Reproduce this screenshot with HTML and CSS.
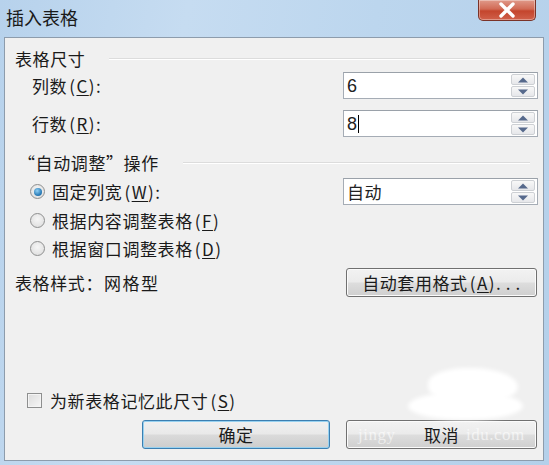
FILE: index.html
```html
<!DOCTYPE html>
<html lang="zh-CN">
<head>
<meta charset="utf-8">
<title>插入表格</title>
<link rel="stylesheet" href="styles.css">
</head>
<body>
<div class="window">
  <div class="titlebar">
    <span class="title">插入表格</span>
    <div class="close">
      <svg width="22" height="16" viewBox="0 0 22 16"><path d="M5 2 L17 14 M17 2 L5 14" stroke="#fff" stroke-width="3.4" stroke-linecap="round"/></svg>
    </div>
  </div>
  <div class="client">
    <div class="group h1"><span>表格尺寸</span><i class="rule"></i></div>
    <div class="row r-cols">
      <span class="label">列数<span class="acc">(<u>C</u>)</span>:</span>
      <div class="spin"><span class="val">6</span><div class="arrows"><b class="up"></b><b class="down"></b></div></div>
    </div>
    <div class="row r-rows">
      <span class="label">行数<span class="acc">(<u>R</u>)</span>:</span>
      <div class="spin"><span class="val">8<i class="caret"></i></span><div class="arrows"><b class="up"></b><b class="down"></b></div></div>
    </div>
    <div class="group h2"><span>“自动调整”操作</span><i class="rule"></i></div>
    <div class="row radio-row r-fixed">
      <span class="radio on"></span><span class="rlabel">固定列宽<span class="acc">(<u>W</u>)</span>:</span>
      <div class="spin"><span class="val cjk">自动</span><div class="arrows"><b class="up"></b><b class="down"></b></div></div>
    </div>
    <div class="row radio-row r-plain">
      <span class="radio"></span><span class="rlabel">根据内容调整表格<span class="acc">(<u>F</u>)</span></span>
    </div>
    <div class="row radio-row r-plain">
      <span class="radio"></span><span class="rlabel">根据窗口调整表格<span class="acc">(<u>D</u>)</span></span>
    </div>
    <div class="row r-style">
      <span class="slabel">表格样式：<span class="sval">网格型</span></span>
      <button class="btn wide">自动套用格式<span class="acc">(<u>A</u>)</span>. . .</button>
    </div>
    <div class="spacer"></div>
    <div class="row r-check">
      <span class="check"></span><span class="clabel">为新表格记忆此尺寸<span class="acc">(<u>S</u>)</span></span>
    </div>
    <div class="row r-buttons">
      <button class="btn ok">确定</button>
      <button class="btn cancel">取消</button>
    </div>
  </div>
  <div class="watermark"></div>
  <div class="watermark w2"></div>
  <div class="wm-text wm-left">jingy</div>
  <div class="wm-text wm-right">idu.com</div>
</div>
</body>
</html>
```
FILE: styles.css
```css
* { box-sizing: border-box; }
html, body { margin: 0; padding: 0; }
body {
  width: 549px;
  height: 465px;
  overflow: hidden;
  font-family: "Noto Sans CJK SC", "Noto Sans", sans-serif;
  color: #1a1a1a;
}
.window {
  position: relative;
  width: 549px;
  height: 465px;
  background: linear-gradient(100deg, #b7d2ec 0%, #c6dcf1 30%, #bcd6ee 60%, #b4d0ea 100%);
  display: flex;
  flex-direction: column;
}
.titlebar {
  height: 37px;
  display: flex;
  align-items: flex-start;
  padding-left: 6px;
}
.title {
  font-size: 18px;
  line-height: 18px;
  margin-top: 8px;
  color: #1a1a1a;
}
.close {
  margin-left: auto;
  margin-right: 13px;
  width: 58px;
  height: 21px;
  border: 1px solid #7a3328;
  border-top: none;
  border-radius: 0 0 5px 5px;
  background: linear-gradient(#e09a8a 0%, #d16a55 45%, #c4452d 55%, #d0604a 100%);
  display: flex;
  align-items: center;
  justify-content: center;
  box-shadow: inset 0 0 0 1px rgba(255,255,255,0.35);
}
.close svg { margin-top: -1px; }
.client {
  margin: 0 5px 4px 4px;
  height: 424px;
  border: 1px solid #8d9cac;
  background: #f0f0f0;
  display: flex;
  flex-direction: column;
  padding: 0 5px 11px 10px;
  font-size: 17px;
  letter-spacing: 0.6px;
}
.acc { margin-left: 2px; letter-spacing: 1.5px; }
.group {
  height: 24px;
  display: flex;
  align-items: center;
  font-size: 17px;
}
.group .rule {
  flex: 1;
  height: 2px;
  border-top: 1px solid #dcdcdc;
  border-bottom: 1px solid #ffffff;
  margin: 2px 8px 0 24px;
}
.h1 { margin-top: 8px; }
.h2 { margin-top: 13px; margin-left: 3px; }
.row {
  display: flex;
  align-items: center;
}
.label { padding-left: 17px; }
.r-cols { height: 27px; margin-top: 2px; }
.r-rows { height: 27px; margin-top: 11px; }
.r-fixed { height: 27px; margin-top: 4px; }
.r-plain { height: 28px; }
.r-fixed + .r-plain { margin-top: 1px; }
.r-style { height: 29px; margin-top: 6px; }
.spacer { flex: 1; }
.r-check { height: 24px; }
.r-buttons { height: 29px; margin-top: 8px; }
u { text-decoration-thickness: 1px; text-underline-offset: 2px; }

.spin {
  margin-left: auto;
  width: 195px;
  height: 27px;
  border: 1px solid #a5acb5;
  border-top-color: #9aa1a9;
  background: #fff;
  display: flex;
  align-items: center;
  padding: 1px 1px 1px 3px;
  letter-spacing: 0;
}
.val {
  flex: 1;
  font-family: "Liberation Sans", "Noto Sans CJK SC", sans-serif;
  font-size: 18px;
  line-height: 20px;
  color: #222;
  display: flex;
  align-items: center;
}
.val.cjk { font-family: "Noto Sans CJK SC", sans-serif; font-size: 17px; letter-spacing: 0.6px; }
.caret {
  display: inline-block;
  width: 1px;
  height: 18px;
  background: #000;
  margin-left: 1px;
}
.arrows {
  width: 24px;
  height: 23px;
  display: flex;
  flex-direction: column;
  gap: 1px;
  margin-right: 1px;
}
.arrows b {
  flex: 1;
  border: 1px solid #cdd0d4;
  border-radius: 2px;
  background: linear-gradient(#f8f8f8, #e6e7ea);
  position: relative;
}
.arrows b::after {
  content: "";
  position: absolute;
  left: 50%;
  top: 50%;
  transform: translate(-50%, -50%);
  border-left: 5px solid transparent;
  border-right: 5px solid transparent;
}
.arrows .up::after { border-bottom: 5px solid #56698c; }
.arrows .down::after { border-top: 5px solid #56698c; }

.radio-row { padding-left: 15px; }
.radio {
  width: 15px;
  height: 15px;
  border-radius: 50%;
  border: 1px solid #8e8f8f;
  background: radial-gradient(circle at 50% 40%, #f6f6f6 0%, #dadada 100%);
  position: relative;
}
.radio.on::after {
  content: "";
  position: absolute;
  left: 2.5px; top: 2.5px;
  width: 8px; height: 8px;
  border-radius: 50%;
  background: radial-gradient(circle at 40% 35%, #8fd0f5 0%, #2d7fba 60%, #1b5d92 100%);
}
.rlabel { margin-left: 7px; }
.sval { margin-left: 1px; letter-spacing: 1.5px; }

.btn {
  font-family: "Noto Sans CJK SC", sans-serif;
  font-size: 17px;
  letter-spacing: 0.6px;
  color: #1a1a1a;
  height: 29px;
  border: 1px solid #707070;
  border-radius: 3px;
  background: linear-gradient(#f2f2f2 0%, #ebebeb 48%, #dddddd 52%, #cfcfcf 100%);
  box-shadow: inset 0 0 0 1px #fbfbfb;
  padding: 0;
  line-height: 25px;
}
.btn.wide { margin-left: auto; width: 191px; margin-right: 1px; }
.r-check { padding-left: 12px; }
.check {
  width: 15px;
  height: 15px;
  border: 1px solid #8e8f8f;
  background: linear-gradient(135deg, #dcdcdc, #f6f6f6);
  box-shadow: inset 0 0 0 1px #f4f4f4;
}
.clabel { margin-left: 8px; }
.btn.ok {
  margin-left: 127px;
  width: 188px;
  border-color: #3c7fb1;
  box-shadow: inset 0 0 0 1px #97d1f0;
  background: linear-gradient(#f0f0f0 0%, #e9e9e9 48%, #dadada 52%, #cdcdcd 100%);
}
.btn.cancel {
  margin-left: 16px;
  width: 191px;
}
.watermark {
  position: absolute;
  left: 428px;
  top: 368px;
  width: 90px;
  height: 36px;
  border-radius: 45% 55% 50% 50%;
  background: #ffffff;
  filter: blur(2px);
}
.watermark.w2 {
  left: 408px;
  top: 392px;
  width: 115px;
  height: 28px;
  border-radius: 50%;
}
.wm-text {
  position: absolute;
  top: 425px;
  font-family: "Liberation Serif", serif;
  font-size: 17px;
  color: rgba(255,255,255,0.6);
  letter-spacing: 0.5px;
}
.wm-left { left: 358px; }
.wm-right { left: 466px; }
```
